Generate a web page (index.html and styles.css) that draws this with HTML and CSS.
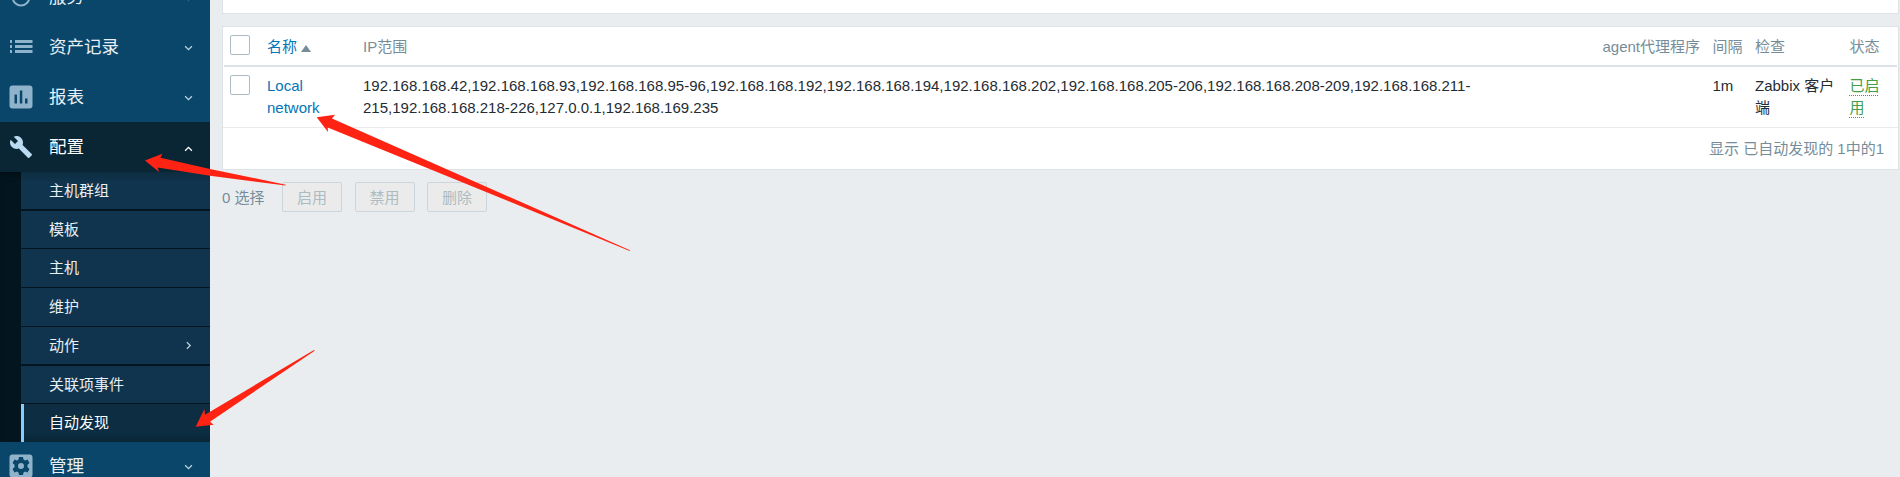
FILE: index.html
```html
<!DOCTYPE html>
<html lang="zh-CN">
<head>
<meta charset="utf-8">
<title>自动发现</title>
<link rel="stylesheet" href="styles.css">
</head>
<body>
<div class="layout">
  <nav class="sidebar">
    <ul class="menu">
      <li class="menu-item">
        <svg class="icon" viewBox="0 0 24 24"><circle cx="12" cy="12" r="8.400" fill="none" stroke="currentColor" stroke-width="2"/></svg>
        <span class="label">服务</span>
        <svg class="chevron" viewBox="0 0 8 6"><path d="M1 1l3 3 3-3"/></svg>
      </li>
      <li class="menu-item">
        <svg class="icon" viewBox="0 0 24 24"><path fill="currentColor" d="M1 5h2v3H1zM6 5h17.500v3H6zM1 10h2v3H1zM6 10h17.500v3H6zM1 15h2v3H1zM6 15h17.500v3H6z"/></svg>
        <span class="label">资产记录</span>
        <svg class="chevron" viewBox="0 0 8 6"><path d="M1 1l3 3 3-3"/></svg>
      </li>
      <li class="menu-item">
        <svg class="icon" viewBox="0 0 24 24"><path fill="currentColor" fill-rule="evenodd" d="M3.500.5h17a3 3 0 0 1 3 3v17a3 3 0 0 1-3 3h-17a3 3 0 0 1-3-3v-17a3 3 0 0 1 3-3zM5.500 9.500v9H8v-9zM10.800 5.500v13h2.500v-13zM16 13.500v5h2.500v-5z"/></svg>
        <span class="label">报表</span>
        <svg class="chevron" viewBox="0 0 8 6"><path d="M1 1l3 3 3-3"/></svg>
      </li>
      <li class="menu-item open">
        <svg class="icon" viewBox="0 0 24 24"><path fill="currentColor" d="M22.700 19l-9.100-9.100c.9-2.300.4-5-1.500-6.900-2-2-5-2.400-7.400-1.300L9 6 6 9 1.600 4.700C.4 7.100.9 10.100 2.900 12.100c1.900 1.900 4.600 2.400 6.900 1.500l9.100 9.100c.4.400 1 .4 1.400 0l2.300-2.300c.5-.4.5-1.100.1-1.400z"/></svg>
        <span class="label">配置</span>
        <svg class="chevron" viewBox="0 0 8 6"><path d="M1 5l3-3 3 3"/></svg>
      </li>
    </ul>
    <ul class="submenu">
      <li class="thick">主机群组</li>
      <li>模板</li>
      <li class="tall">主机</li>
      <li class="tall">维护</li>
      <li class="thick">动作<svg class="chevron" viewBox="0 0 8 8"><path d="M2.500 1l3 3-3 3"/></svg></li>
      <li>关联项事件</li>
      <li class="current">自动发现</li>
    </ul>
    <ul class="menu">
      <li class="menu-item last">
        <svg class="icon" viewBox="0 0 24 24"><path fill="currentColor" fill-rule="evenodd" d="M3.500.5h17a3 3 0 0 1 3 3v17a3 3 0 0 1-3 3h-17a3 3 0 0 1-3-3v-17a3 3 0 0 1 3-3zM10 3l-.5 2.500-1.600.9-2.400-.9-2 3.500 2 1.700v2.600l-2 1.700 2 3.500 2.400-.9 1.600.9L10 21h4l.5-2.500 1.600-.9 2.400.9 2-3.500-2-1.700v-2.600l2-1.700-2-3.500-2.400.9-1.600-.9L14 3zM12 9a3 3 0 1 1 0 6 3 3 0 0 1 0-6z"/></svg>
        <span class="label">管理</span>
        <svg class="chevron" viewBox="0 0 8 6"><path d="M1 1l3 3 3-3"/></svg>
      </li>
    </ul>
  </nav>
  <main class="content">
    <section class="filter-panel"></section>
    <section class="table-panel">
      <div class="row head">
        <span><i class="checkbox"></i></span>
        <span class="sort">名称<i class="sort-up"></i></span>
        <span>IP范围</span>
        <span>agent代理程序</span>
        <span>间隔</span>
        <span>检查</span>
        <span>状态</span>
      </div>
      <div class="row body">
        <span><i class="checkbox"></i></span>
        <a class="name">Local<br>network</a>
        <span class="ips">192.168.168.42,192.168.168.93,192.168.168.95-96,192.168.168.192,192.168.168.194,192.168.168.202,192.168.168.205-206,192.168.168.208-209,192.168.168.211-<br>215,192.168.168.218-226,127.0.0.1,192.168.169.235</span>
        <span></span>
        <span>1m</span>
        <span>Zabbix 客户<br>端</span>
        <span><a class="enabled">已启<br>用</a></span>
      </div>
      <div class="table-foot">显示 已自动发现的 1中的1</div>
    </section>
    <div class="actions">
      <span class="selected">0 选择</span>
      <button disabled>启用</button>
      <button disabled>禁用</button>
      <button disabled>删除</button>
    </div>
  </main>
</div>
<svg class="arrows" viewBox="0 0 1900 477">
  <path d="M145 160.500L162.300 153.700 160.500 157.800 210 169 285.800 184.700 285.500 185.500 210 175.700 157.700 167.500 159 172z"/>
  <path d="M316.700 117.300L335 114.800 332 118.400 630 250.300 629.700 251 510 201.800 327.700 127.500 328 132z"/>
  <path d="M195.700 426.700L204.400 409 205 414.700 314 350 314.700 350.700 210 421.700 213.700 424.700z"/>
</svg>
</body>
</html>
```
FILE: styles.css
```css
* { box-sizing: border-box; }
body {
  margin: 0;
  height: 477px;
  overflow: hidden;
  background: #e9edf0;
  color: #1f2c33;
  font: 15px/22px "Liberation Sans", "Noto Sans CJK SC", sans-serif;
}
ul { margin: 0; padding: 0; list-style: none; }
.layout { display: flex; height: 477px; overflow: hidden; }

.sidebar { width: 210px; height: 505px; flex: none; margin-top: -28px; background: #0a466a; }
.menu-item {
  display: flex;
  align-items: center;
  height: 50px;
  padding: 0 17px 0 9px;
  color: #8fb3ca;
}
.icon { width: 24px; height: 24px; flex: none; }
.label { flex: 1; margin-left: 16px; font-size: 17.500px; color: #e8f0f5; }
.chevron { width: 9px; height: 7px; margin-top: 3px; fill: none; stroke: #b9d0df; stroke-width: 1.200; }
.open { background: #0a2635; color: #b9daf0; }
.open .label { color: #fff; }
.open .chevron { stroke: #fff; }
.last { height: 48px; }

.submenu { padding-left: 21px; background: #03151e; box-shadow: inset 0 6px 6px -4px #020d14; }
.submenu li {
  display: flex;
  align-items: center;
  justify-content: space-between;
  height: 38px;
  padding: 0 17px 0 28px;
  border-bottom: 1px solid #04151f;
  background: #10344d;
  color: #e8f0f5;
}
.submenu li:first-child { background: linear-gradient(#0c2c40, #10344d 10px); }
.submenu .tall { height: 39px; }
.submenu .thick { height: 39px; border-bottom-width: 2px; }
.submenu .current {
  padding-left: 25px;
  border-left: 3px solid #85cdfa;
  border-bottom: 0;
  background: linear-gradient(#0c2d42 28px, #0a2636);
  color: #fff;
}
.submenu .chevron { width: 9px; height: 9px; margin-top: 0; }

.content { flex: 1; padding: 0 1px 0 12px; }
.filter-panel { height: 14px; border: 1px solid #dce2e5; border-top: 0; background: #fff; }
.table-panel { height: 144px; margin-top: 12px; border: 1px solid #dce2e5; background: #fff; }
.row {
  display: grid;
  grid-template-columns: 37px 96px 1239.500px 110px 42.500px 94.500px 1fr;
  white-space: nowrap;
}
.head { height: 40px; margin: 0 1px; padding: 9px 0 0 6px; border-bottom: 2px solid #dce2e5; color: #768d99; }
.head .checkbox { margin-top: -1px; }
.body { height: 61px; padding: 8px 0 0 7px; border-bottom: 1px solid #e8ecee; }
.checkbox { display: block; width: 20px; height: 20px; border: 1px solid #acbbc2; border-radius: 2px; background: #fff; }
.sort, .name { color: #0275b8; }
.sort-up {
  display: inline-block;
  margin-left: 4px;
  border: 5px solid transparent;
  border-top: 0;
  border-bottom: 7px solid #768d99;
}
.enabled { color: #429e47; text-decoration: underline dotted 1px; text-underline-offset: 4px; }
.table-foot { padding: 10px 14px 0; text-align: right; color: #768d99; }

.actions { display: flex; align-items: center; height: 30px; margin-top: 12px; color: #768d99; }
.selected { width: 60px; padding-top: 1px; }
button {
  width: 60px;
  height: 30px;
  margin-right: 12.500px;
  padding: 1px 0 0;
  border: 1px solid #ccd5d9;
  border-radius: 2px;
  background: #ebebeb;
  color: #acbbc2;
  font: inherit;
}

.arrows { position: absolute; left: 0; top: 0; width: 1900px; height: 477px; fill: #ff2314; pointer-events: none; }
```
